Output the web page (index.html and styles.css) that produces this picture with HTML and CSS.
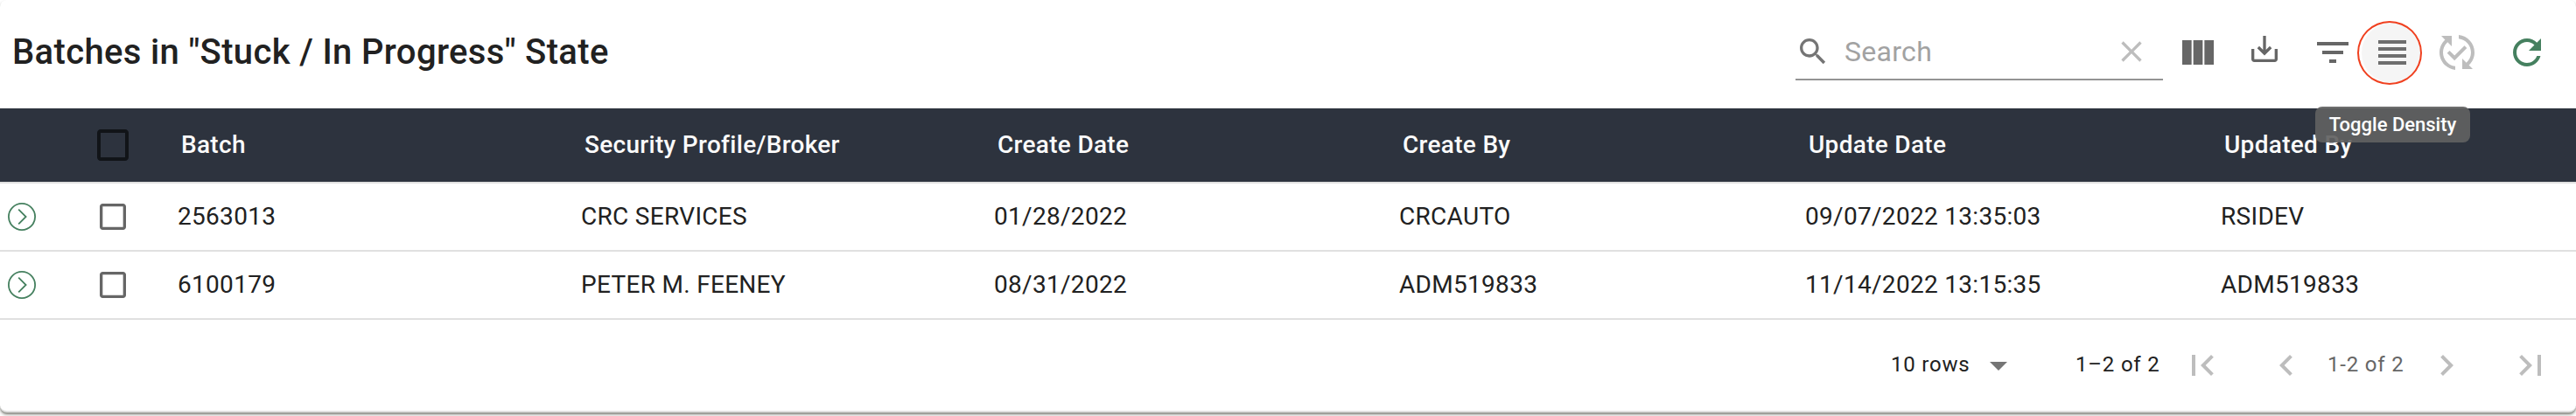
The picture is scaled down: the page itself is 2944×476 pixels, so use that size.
FILE: index.html
```html
<!DOCTYPE html>
<html lang="en">
<head>
<meta charset="utf-8">
<title>Batches</title>
<link rel="stylesheet" href="styles.css">
</head>
<body>
<main class="card">
  <header class="toolbar">
    <h1 class="title">Batches in "Stuck / In Progress" State</h1>
    <div class="search">
      <svg class="icon icon-small" viewBox="0 0 24 24"><path d="M15.5 14h-.79l-.28-.27C15.41 12.59 16 11.11 16 9.5 16 5.91 13.09 3 9.5 3S3 5.91 3 9.5 5.91 16 9.5 16c1.61 0 3.09-.59 4.23-1.57l.27.28v.79l5 4.99L20.49 19l-4.99-5zm-6 0C7.01 14 5 11.99 5 9.5S7.01 5 9.5 5 14 7.01 14 9.5 11.99 14 9.5 14z"/></svg>
      <span class="search-text">Search</span>
      <svg class="icon icon-small disabled" viewBox="0 0 24 24"><path d="M19 6.41L17.59 5 12 10.59 6.41 5 5 6.41 10.59 12 5 17.59 6.41 19 12 13.41 17.59 19 19 17.59 13.41 12z"/></svg>
    </div>
    <div class="actions">
      <svg class="icon columns" viewBox="0 0 24 24"><path d="M14.67 5v14H9.33V5h5.34zm1 14H21V5h-5.33v14zm-7.34 0V5H3v14h5.33z"/></svg>
      <svg class="icon icon-small download" viewBox="0 0 24 24"><path d="M19 12v7H5v-7H3v7c0 1.1.9 2 2 2h14c1.1 0 2-.9 2-2v-7h-2zm-6 .67l2.59-2.58L17 11.5l-5 5-5-5 1.41-1.41L11 12.67V3h2z"/></svg>
      <svg class="icon filter" viewBox="0 0 24 24"><path d="M10 18h4v-2h-4v2zM3 6v2h18V6H3zm3 7h12v-2H6v2z"/></svg>
      <div class="density">
        <svg class="icon" viewBox="0 0 24 24"><path d="M4 15h16v-2H4v2zm0 4h16v-2H4v2zm0-8h16V9H4v2zm0-6v2h16V5H4z"/></svg>
        <span class="ring"></span>
        <span class="tooltip">Toggle Density</span>
      </div>
      <svg class="icon disabled" viewBox="0 0 24 24"><path d="M17.66 9.53l-7.07 7.07-4.24-4.24 1.41-1.41 2.83 2.83 5.66-5.66 1.41 1.41zM4 12c0-2.33 1.02-4.42 2.62-5.88L9 8.5v-6H3l2.2 2.2C3.24 6.52 2 9.11 2 12c0 5.19 3.95 9.45 9 9.95v-2.02c-3.94-.49-7-3.86-7-7.93zm18 0c0-5.19-3.95-9.45-9-9.95v2.02c3.94.49 7 3.86 7 7.93 0 2.33-1.02 4.42-2.62 5.88L15 15.5v6h6l-2.2-2.2c1.96-1.82 3.2-4.41 3.2-7.3z"/></svg>
      <svg class="icon refresh" viewBox="0 0 24 24"><path d="M17.65 6.35C16.2 4.9 14.21 4 12 4c-4.42 0-7.99 3.58-7.99 8s3.57 8 7.99 8c3.73 0 6.84-2.55 7.73-6h-2.08c-.82 2.33-3.04 4-5.65 4-3.31 0-6-2.69-6-6s2.69-6 6-6c1.66 0 3.14.69 4.22 1.78L13 11h7V4l-2.35 2.35z"/></svg>
    </div>
  </header>
  <section class="table">
    <div class="row head">
      <span></span>
      <svg class="icon check" viewBox="0 0 24 24"><path d="M19 5v14H5V5h14m0-2H5c-1.1 0-2 .9-2 2v14c0 1.1.9 2 2 2h14c1.1 0 2-.9 2-2V5c0-1.1-.9-2-2-2z"/></svg>
      <span>Batch</span><span>Security Profile/Broker</span><span>Create Date</span><span>Create By</span><span>Update Date</span><span>Updated By</span>
    </div>
    <div class="row">
      <svg class="expand" viewBox="0 0 32 32"><circle cx="16" cy="16" r="15.1"/><path d="M12.2 7.6L20.6 16l-8.4 8.4"/></svg>
      <svg class="icon icon-small check" viewBox="0 0 24 24"><path d="M19 5v14H5V5h14m0-2H5c-1.1 0-2 .9-2 2v14c0 1.1.9 2 2 2h14c1.1 0 2-.9 2-2V5c0-1.1-.9-2-2-2z"/></svg>
      <span>2563013</span><span>CRC SERVICES</span><span>01/28/2022</span><span>CRCAUTO</span><span>09/07/2022 13:35:03</span><span>RSIDEV</span>
    </div>
    <div class="row">
      <svg class="expand" viewBox="0 0 32 32"><circle cx="16" cy="16" r="15.1"/><path d="M12.2 7.6L20.6 16l-8.4 8.4"/></svg>
      <svg class="icon icon-small check" viewBox="0 0 24 24"><path d="M19 5v14H5V5h14m0-2H5c-1.1 0-2 .9-2 2v14c0 1.1.9 2 2 2h14c1.1 0 2-.9 2-2V5c0-1.1-.9-2-2-2z"/></svg>
      <span>6100179</span><span>PETER M. FEENEY</span><span>08/31/2022</span><span>ADM519833</span><span>11/14/2022 13:15:35</span><span>ADM519833</span>
    </div>
  </section>
  <footer class="pager">
    <span class="rows">10 rows</span>
    <svg class="icon caret" viewBox="0 0 24 24"><path d="M7 10l5 5 5-5z"/></svg>
    <span class="range">1–2 of 2</span>
    <svg class="icon disabled first" viewBox="0 0 24 24"><path d="M18.41 16.59L13.82 12l4.59-4.59L17 6l-6 6 6 6zM6 6h2v12H6z"/></svg>
    <svg class="icon disabled prev" viewBox="0 0 24 24"><path d="M15.41 7.41L14 6l-6 6 6 6 1.41-1.41L10.83 12z"/></svg>
    <span class="page">1-2 of 2</span>
    <svg class="icon disabled next" viewBox="0 0 24 24"><path d="M10 6L8.59 7.41 13.17 12l-4.58 4.59L10 18l6-6z"/></svg>
    <svg class="icon disabled last" viewBox="0 0 24 24"><path d="M5.59 7.41L10.18 12l-4.59 4.59L7 18l6-6-6-6zM16 6h2v12h-2z"/></svg>
  </footer>
</main>
</body>
</html>
```
FILE: styles.css
```css
* { box-sizing: border-box; }
body {
  margin: 0;
  height: 476px;
  overflow: hidden;
  background: #fff;
  color: #212121;
  font-family: Roboto, "Liberation Sans", sans-serif;
  font-size: 28px;
  letter-spacing: 0.3px;
}
.card {
  height: 472px;
  background: #fff;
  border-bottom: 2px solid #e0e0e0;
  border-radius: 8px;
  box-shadow: 0 2px 2px rgba(60, 62, 50, 0.4), 0 3px 4px rgba(60, 62, 50, 0.3);
}
.icon { display: block; flex: none; width: 48px; height: 48px; fill: #666; }
.icon-small { width: 40px; height: 40px; }
.icon.disabled { fill: #bdbdbd; }
.toolbar { display: flex; height: 124px; padding: 0 32px 0 14px; }
.title {
  flex: 1;
  margin: 0;
  font-size: 40px;
  font-weight: 500;
  line-height: 119px;
  letter-spacing: 0.35px;
}
.search {
  display: flex;
  align-items: center;
  width: 420px;
  height: 64px;
  margin-top: 28px;
  padding-right: 16px;
  border-bottom: 2px solid #949494;
}
.search .icon { fill: #757575; }
.search .icon.disabled { fill: #bdbdbd; }
.search-text { flex: 1; padding-left: 16px; font-size: 32px; color: #a2a2a2; }
.actions { display: flex; align-items: flex-start; padding-top: 36px; }
.columns { margin-left: 16px; }
.download { margin-left: 32px; }
.filter { margin-left: 34px; }
.density { position: relative; margin: 0 26px 0 20px; }
.density .icon { position: relative; z-index: 1; fill: #6e6e6e; }
.ring {
  position: absolute;
  left: -16px;
  top: -12px;
  width: 74px;
  height: 73px;
  border: 2px solid #f0401f;
  border-radius: 50%;
  background: #f5f5f5;
  box-shadow: inset 3px 0 1px #fff;
}
.tooltip {
  position: absolute;
  left: -64px;
  top: 86px;
  z-index: 2;
  width: 177px;
  height: 41px;
  border-radius: 8px;
  background: rgba(97, 97, 97, 0.92);
  color: #fff;
  font-size: 22px;
  font-weight: 500;
  line-height: 41px;
  text-align: center;
  letter-spacing: 0;
  white-space: nowrap;
}
.refresh { margin-left: 32px; }
.icon.refresh { fill: #45805f; }
.row {
  display: grid;
  grid-template-columns: 105px 98px 461px 472px 463px 464px 475px 1fr;
  align-items: center;
  height: 78px;
  border-bottom: 2px solid #e0e0e0;
}
.head {
  grid-template-columns: 105px 102px 461px 472px 463px 464px 475px 1fr;
  height: 86px;
  background: #2d333e;
  color: #fafafa;
  font-weight: 500;
}
.row span { padding-bottom: 2px; }
.row .check { margin-left: 4px; }
.head .check { margin-left: 0; fill: #111418; }
.expand { width: 32px; height: 32px; margin-left: 9px; fill: none; stroke: #45805f; stroke-width: 1.8; }
.pager { display: flex; align-items: center; height: 104px; font-size: 24px; letter-spacing: 0.8px; }
.pager span { padding-bottom: 2px; }
.rows { width: 99px; margin-left: 2161px; }
.range { width: 121px; margin-left: 64px; }
.first { margin-right: 48px; }
.page { width: 112px; margin-left: 23px; color: #666; }
.next { margin-right: 48px; }
.icon.caret { fill: #757575; }
```
